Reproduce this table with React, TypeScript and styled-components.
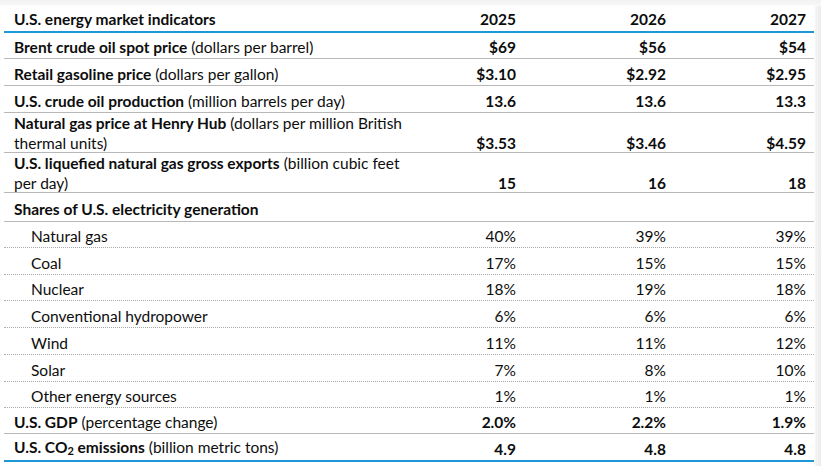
import React from "react";
import styled, { createGlobalStyle } from "styled-components";

type Line = "solid" | "dotted" | "blue";

interface IRow {
  label: string;
  unit?: React.ReactNode;
  values: string[];
  sub?: boolean;
  height: number;
  line: Line;
}

const rows: IRow[] = [
  { label: "Brent crude oil spot price", unit: "(dollars per barrel)", values: ["$69", "$56", "$54"], height: 26, line: "solid" },
  { label: "Retail gasoline price", unit: "(dollars per gallon)", values: ["$3.10", "$2.92", "$2.95"], height: 27, line: "solid" },
  { label: "U.S. crude oil production", unit: "(million barrels per day)", values: ["13.6", "13.6", "13.3"], height: 27, line: "solid" },
  {
    label: "Natural gas price at Henry Hub",
    unit: (
      <>
        (dollars per million British
        <br />
        thermal units)
      </>
    ),
    values: ["$3.53", "$3.46", "$4.59"],
    height: 40,
    line: "solid",
  },
  {
    label: "U.S. liquefied natural gas gross exports",
    unit: (
      <>
        (billion cubic feet
        <br />
        per day)
      </>
    ),
    values: ["15", "16", "18"],
    height: 40,
    line: "solid",
  },
  { label: "Shares of U.S. electricity generation", values: ["", "", ""], height: 29, line: "solid" },
  { label: "Natural gas", values: ["40%", "39%", "39%"], sub: true, height: 26, line: "dotted" },
  { label: "Coal", values: ["17%", "15%", "15%"], sub: true, height: 27, line: "dotted" },
  { label: "Nuclear", values: ["18%", "19%", "18%"], sub: true, height: 26, line: "dotted" },
  { label: "Conventional hydropower", values: ["6%", "6%", "6%"], sub: true, height: 27, line: "dotted" },
  { label: "Wind", values: ["11%", "11%", "12%"], sub: true, height: 27, line: "dotted" },
  { label: "Solar", values: ["7%", "8%", "10%"], sub: true, height: 27, line: "dotted" },
  { label: "Other energy sources", values: ["1%", "1%", "1%"], sub: true, height: 26, line: "dotted" },
  { label: "U.S. GDP", unit: "(percentage change)", values: ["2.0%", "2.2%", "1.9%"], height: 26, line: "solid" },
  { label: "U.S. CO", unit: "(billion metric tons)", values: ["4.9", "4.8", "4.8"], height: 28, line: "blue" },
];

export default function App() {
  return (
    <>
      <GlobalStyle />
      <Page>
        <Table>
          <HeaderRow>
            <HeadLabel>U.S. energy market indicators</HeadLabel>
            <HeadValue>2025</HeadValue>
            <HeadValue>2026</HeadValue>
            <HeadValue>2027</HeadValue>
          </HeaderRow>
          {rows.map((row) => (
            <Row
              key={row.label + row.values.join()}
              $line={row.line}
              $height={row.height}
              $tall={row.height > 30}
            >
              <Label $sub={row.sub}>
                {row.sub ? (
                  row.label
                ) : (
                  <Strong>
                    {row.label}
                    {row.label === "U.S. CO" && (
                      <>
                        <Sub>2</Sub> emissions
                      </>
                    )}
                  </Strong>
                )}
                {row.unit && <> {row.unit}</>}
              </Label>
              {row.values.map((v, i) => (
                <Value key={i} $sub={row.sub}>
                  {v}
                </Value>
              ))}
            </Row>
          ))}
        </Table>
      </Page>
    </>
  );
}

const GlobalStyle = createGlobalStyle`
  html, body {
    margin: 0;
    padding: 0;
    background: #fff;
  }
  body {
    font-family: Lato, "Open Sans", "Liberation Sans", sans-serif;
    color: #0d0d0d;
  }
`;

const Page = styled.div`
  width: 821px;
  height: 466px;
  overflow: hidden;
  background:
    linear-gradient(180deg, #f1f2f3 0, #f7f7f8 5px, #fff 6px) top / 100% 6px no-repeat,
    linear-gradient(90deg, #fff 0, #fff 814px, #f3f3f4 816px, #ececed 821px);
  background-color: #fff;
`;

const Table = styled.div`
  margin-left: 4px;
  width: 810px;
  font-size: 15.5px;
`;

const grid = `
  display: grid;
  grid-template-columns: minmax(0, 1fr) 150px 150px 140px;
`;

const HeaderRow = styled.div`
  ${grid}
  height: 33px;
  align-items: end;
  padding-bottom: 2px;
  box-sizing: border-box;
  border-bottom: 2px solid #1b98d5;
  font-weight: 700;
  line-height: 20px;
`;

const HeadLabel = styled.div`
  padding-left: 10px;
`;

const HeadValue = styled.div`
  text-align: right;
  padding-right: 8px;
`;

const lineStyles: Record<Line, string> = {
  solid: "1px solid #b8b8b8",
  dotted: "1px dotted #a9a9a9",
  blue: "2px solid #1b98d5",
};

const Row = styled.div<{ $line: Line; $height: number; $tall: boolean }>`
  ${grid}
  height: ${(p) => p.$height}px;
  box-sizing: border-box;
  align-items: ${(p) => (p.$tall ? "end" : "center")};
  padding-top: ${(p) => (p.$tall ? 0 : 3)}px;
  border-bottom: ${(p) => lineStyles[p.$line]};
  line-height: 20px;
`;

const Label = styled.div<{ $sub?: boolean }>`
  padding-left: ${(p) => (p.$sub ? 27 : 10)}px;
  white-space: nowrap;
`;

const Strong = styled.span`
  font-weight: 700;
`;

const Sub = styled.span`
  font-size: 11px;
  vertical-align: -2px;
`;

const Value = styled.div<{ $sub?: boolean }>`
  text-align: right;
  padding-right: 8px;
  font-weight: ${(p) => (p.$sub ? 400 : 700)};
`;
